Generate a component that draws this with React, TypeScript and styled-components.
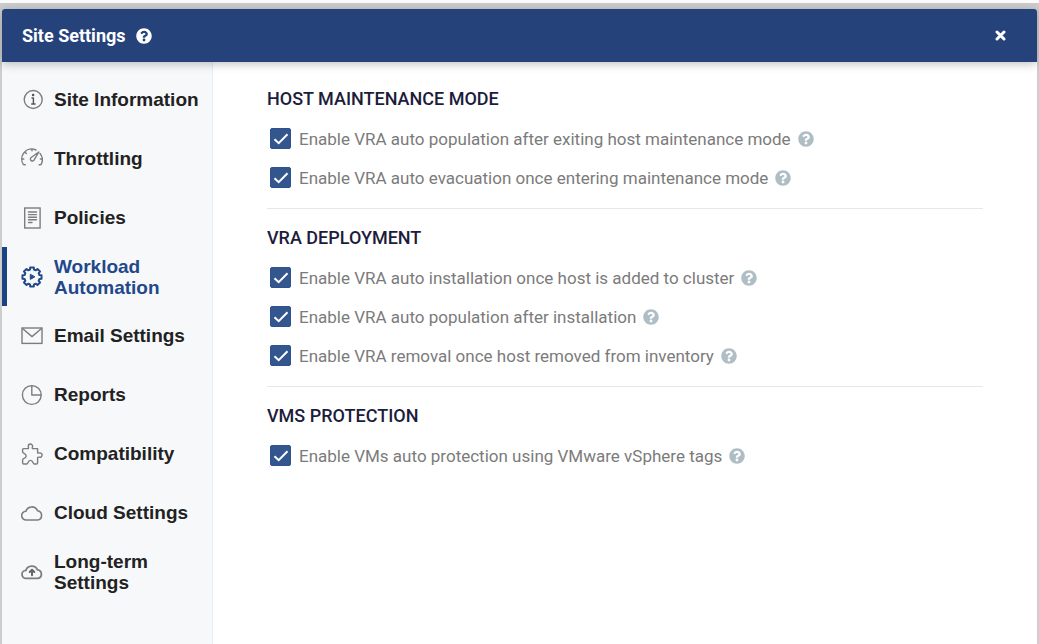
import React, { useState } from "react";
import styled, { createGlobalStyle } from "styled-components";
import { FaQuestionCircle } from "react-icons/fa";

const GlobalStyle = createGlobalStyle`
  * { box-sizing: border-box; }
  html, body, #root { height: 100%; }
  body {
    margin: 0;
    font-family: Roboto, "Liberation Sans", sans-serif;
    background: #ccc;
  }
`;

const Page = styled.div`
  display: flex;
  min-height: 100%;
  border-top: 3px solid #fbfbfb;
  padding: 6px 2px 0;
  background: #cdcdcd;
`;

const Dialog = styled.section`
  display: flex;
  flex-direction: column;
  flex: 1;
  min-width: 0;
  background: #fff;
  border-radius: 3px 3px 0 0;
`;

const Header = styled.header`
  display: flex;
  align-items: center;
  height: 53px;
  padding: 0 31px 0 20px;
  gap: 10px;
  color: #fff;
  background: #25427b;
  border-radius: 3px 3px 0 0;
  box-shadow: 0 2px 10px rgba(0, 0, 0, 0.25);
  z-index: 1;
`;

const Title = styled.h1`
  margin: 0;
  font-size: 18px;
  line-height: 24px;
  font-weight: 700;
`;

const IconButton = styled.button<{ $tone: string }>`
  display: flex;
  flex: none;
  padding: 0;
  border: 0;
  background: none;
  color: ${(p) => p.$tone};
  cursor: pointer;
`;

const CloseButton = styled(IconButton)`
  margin-left: auto;
`;

const CloseIcon = styled.svg`
  width: 11px;
  height: 11px;
  fill: none;
  stroke: currentColor;
  stroke-width: 3;
  stroke-linecap: round;
`;

const Body = styled.div`
  display: flex;
  flex: 1;
`;

const Sidebar = styled.nav`
  flex: none;
  width: 211px;
  padding-top: 8px;
  background: #f7f8fa;
  border-right: 1px solid #e6edf3;
`;

const NavItem = styled.a<{ $active: boolean }>`
  display: flex;
  align-items: center;
  gap: 11px;
  height: 59px;
  padding: 0 8px 0 14px;
  border-left: 5px solid ${(p) => (p.$active ? "#1d4284" : "transparent")};
  color: ${(p) => (p.$active ? "#23488a" : "#222")};
  font-family: "Liberation Sans", Arial, sans-serif;
  font-size: 19px;
  line-height: 21px;
  font-weight: 700;
  text-decoration: none;
`;

const NavIcon = styled.svg<{ $active: boolean }>`
  flex: none;
  width: 22px;
  height: 22px;
  fill: none;
  stroke: ${(p) => (p.$active ? "#23488a" : "#7d7d7d")};
  stroke-width: ${(p) => (p.$active ? 2 : 1.4)};
  stroke-linecap: round;
  stroke-linejoin: round;
`;

const Content = styled.main`
  flex: 1;
  min-width: 0;
  padding: 18px 54px 40px 54px;
`;

const Group = styled.section`
  padding-bottom: 11px;
  & + & {
    border-top: 1px solid #e7e7e7;
    padding-top: 10px;
  }
`;

const GroupTitle = styled.h2`
  margin: 0;
  color: #1c1c3c;
  font-size: 18px;
  line-height: 38px;
  padding-bottom: 1px;
  font-weight: 500;
`;

const Option = styled.div`
  display: flex;
  align-items: center;
  height: 39px;
  padding-left: 3px;
  gap: 7px;
`;

const OptionLabel = styled.label`
  display: flex;
  align-items: center;
  gap: 8px;
  color: #7b7b7b;
  font-size: 17px;
  line-height: 24px;
`;

const CheckWrap = styled.span`
  display: grid;
  width: 21px;
  height: 21px;
  > * {
    grid-area: 1 / 1;
  }
`;

const Checkbox = styled.input`
  appearance: none;
  width: 21px;
  height: 21px;
  margin: 0;
  border: 1px solid #2f528f;
  border-radius: 2px;
  background: #fff;
  &:checked {
    background: #34568f;
  }
`;

const Tick = styled.svg`
  width: 21px;
  height: 21px;
  fill: none;
  stroke: #fff;
  stroke-width: 2;
  pointer-events: none;
`;

// Outline of the eight-toothed wheel, walked one tooth at a time.
const gearPoints = Array.from({ length: 8 }, (_, tooth) =>
  [
    [-15, 7.7],
    [-11, 9.7],
    [11, 9.7],
    [15, 7.7],
  ].map(([offset, radius]) => {
    const angle = ((tooth * 45 + offset) * Math.PI) / 180;
    return `${(11 + radius * Math.sin(angle)).toFixed(2)},${(
      11 -
      radius * Math.cos(angle)
    ).toFixed(2)}`;
  }).join(" ")
).join(" ");

const icons: Record<string, React.ReactNode> = {
  info: (
    <>
      <circle cx="12.2" cy="10.5" r="9" />
      <path d="M11 9H12.4V15M10.7 15h3.4" stroke="#555" />
      <circle cx="12.1" cy="6" r=".6" fill="#555" stroke="#555" />
    </>
  ),
  gauge: (
    <>
      <path d="M4.2 16.8L2.4 16.6A10 10 0 0 1 15 2M19 5.4A10 10 0 0 1 20 16.6L18.2 16.8M1.2 11h1.6M4.3 4.6l1 1M11 1.2v1.6M19.4 11h1.6" />
      <path d="M17.8 4L13 12.2A2 2 0 1 1 9.8 9.8Z" />
    </>
  ),
  document: (
    <>
      <rect x="3.7" y="1" width="15.4" height="20" strokeLinejoin="miter" />
      <path d="M7.5 5h8M7.5 7.6h8M7.5 10.2h8M7.5 12.8h8M7.5 15.5h3.5" />
    </>
  ),
  automation: (
    <>
      <polygon points={gearPoints} />
      <path d="M9.3 8.6v4.8l4.3-2.4Z" fill="#23488a" strokeWidth="1" />
    </>
  ),
  mail: (
    <>
      <rect x="1" y="3" width="20" height="15.4" strokeLinejoin="miter" />
      <path d="M1.5 3.5L11 11.6l9.5-8.1" />
    </>
  ),
  pie: (
    <>
      <circle cx="10.8" cy="11" r="9.4" />
      <path d="M10.8 1.6V11H20.2" />
    </>
  ),
  puzzle: (
    <path d="M2.6 5.6H7.4C8 4.9 7.2 4.3 7.2 3.2A2.2 2.2 0 0 1 11.6 3.2C11.6 4.3 10.8 4.9 11.4 5.6H16.6V9.8C17.2 10.5 18 9.9 18.9 9.9A2.2 2.2 0 0 1 18.9 14.3C18 14.3 17.2 13.7 16.6 14.4V19.8Q16.6 21 15.4 21H13.2C11.8 21 12.4 17.4 9.5 17.4S7.2 21 5.8 21H2.8Q1.6 21 1.6 19.8V16.8C1.6 15.2 5.2 15.6 5.2 12.9S1.6 10.6 1.6 9V6.6Q1.6 5.6 2.6 5.6Z" />
  ),
  cloud: (
    <path d="M5.3 18A4.4 4.4 0 0 1 4.9 9.2 6.2 6.2 0 0 1 16.5 8.7 4.7 4.7 0 0 1 16.6 18Z" strokeWidth="1.6" />
  ),
  upload: (
    <>
      <path d="M5.1 17.4A4 4 0 0 1 4.9 9.4 6.2 6.2 0 0 1 16.5 8.9 4.3 4.3 0 0 1 16.9 17.4Z" strokeWidth="1.8" />
      <path d="M11 14.2V9M8.7 11L11 8.7 13.3 11" stroke="#666" strokeWidth="2" />
    </>
  ),
};

const navigation = [
  { icon: "info", label: "Site Information" },
  { icon: "gauge", label: "Throttling" },
  { icon: "document", label: "Policies" },
  { icon: "automation", label: "Workload Automation" },
  { icon: "mail", label: "Email Settings" },
  { icon: "pie", label: "Reports" },
  { icon: "puzzle", label: "Compatibility" },
  { icon: "cloud", label: "Cloud Settings" },
  { icon: "upload", label: "Long-term Settings" },
];

const groups = [
  {
    title: "HOST MAINTENANCE MODE",
    options: [
      "Enable VRA auto population after exiting host maintenance mode",
      "Enable VRA auto evacuation once entering maintenance mode",
    ],
  },
  {
    title: "VRA DEPLOYMENT",
    options: [
      "Enable VRA auto installation once host is added to cluster",
      "Enable VRA auto population after installation",
      "Enable VRA removal once host removed from inventory",
    ],
  },
  {
    title: "VMS PROTECTION",
    options: ["Enable VMs auto protection using VMware vSphere tags"],
  },
];

function Setting({ label }: { label: string }) {
  const [checked, setChecked] = useState(true);
  return (
    <Option>
      <OptionLabel>
        <CheckWrap>
          <Checkbox
            type="checkbox"
            checked={checked}
            onChange={(e) => setChecked(e.target.checked)}
          />
          {checked && (
            <Tick viewBox="0 0 21 21" aria-hidden="true">
              <path d="M4.5 11.2L8.7 15.2L17.5 6.3" />
            </Tick>
          )}
        </CheckWrap>
        {label}
      </OptionLabel>
      <IconButton type="button" $tone="#afbdc5" aria-label="Help">
        <FaQuestionCircle size={16} />
      </IconButton>
    </Option>
  );
}

export default function App() {
  const [active, setActive] = useState("Workload Automation");
  return (
    <>
      <GlobalStyle />
      <Page>
        <Dialog>
          <Header>
            <Title>Site Settings</Title>
            <IconButton type="button" $tone="#fff" aria-label="Help">
              <FaQuestionCircle size={16} />
            </IconButton>
            <CloseButton type="button" $tone="#fff" aria-label="Close">
              <CloseIcon viewBox="0 0 11 11" aria-hidden="true">
                <path d="M2 2L9 9M9 2L2 9" />
              </CloseIcon>
            </CloseButton>
          </Header>
          <Body>
            <Sidebar>
              {navigation.map(({ icon, label }) => (
                <NavItem
                  key={label}
                  href="#"
                  $active={label === active}
                  onClick={() => setActive(label)}
                >
                  <NavIcon
                    viewBox="0 0 22 22"
                    aria-hidden="true"
                    $active={label === active}
                  >
                    {icons[icon]}
                  </NavIcon>
                  {label}
                </NavItem>
              ))}
            </Sidebar>
            <Content>
              {groups.map((group) => (
                <Group key={group.title}>
                  <GroupTitle>{group.title}</GroupTitle>
                  {group.options.map((option) => (
                    <Setting key={option} label={option} />
                  ))}
                </Group>
              ))}
            </Content>
          </Body>
        </Dialog>
      </Page>
    </>
  );
}
